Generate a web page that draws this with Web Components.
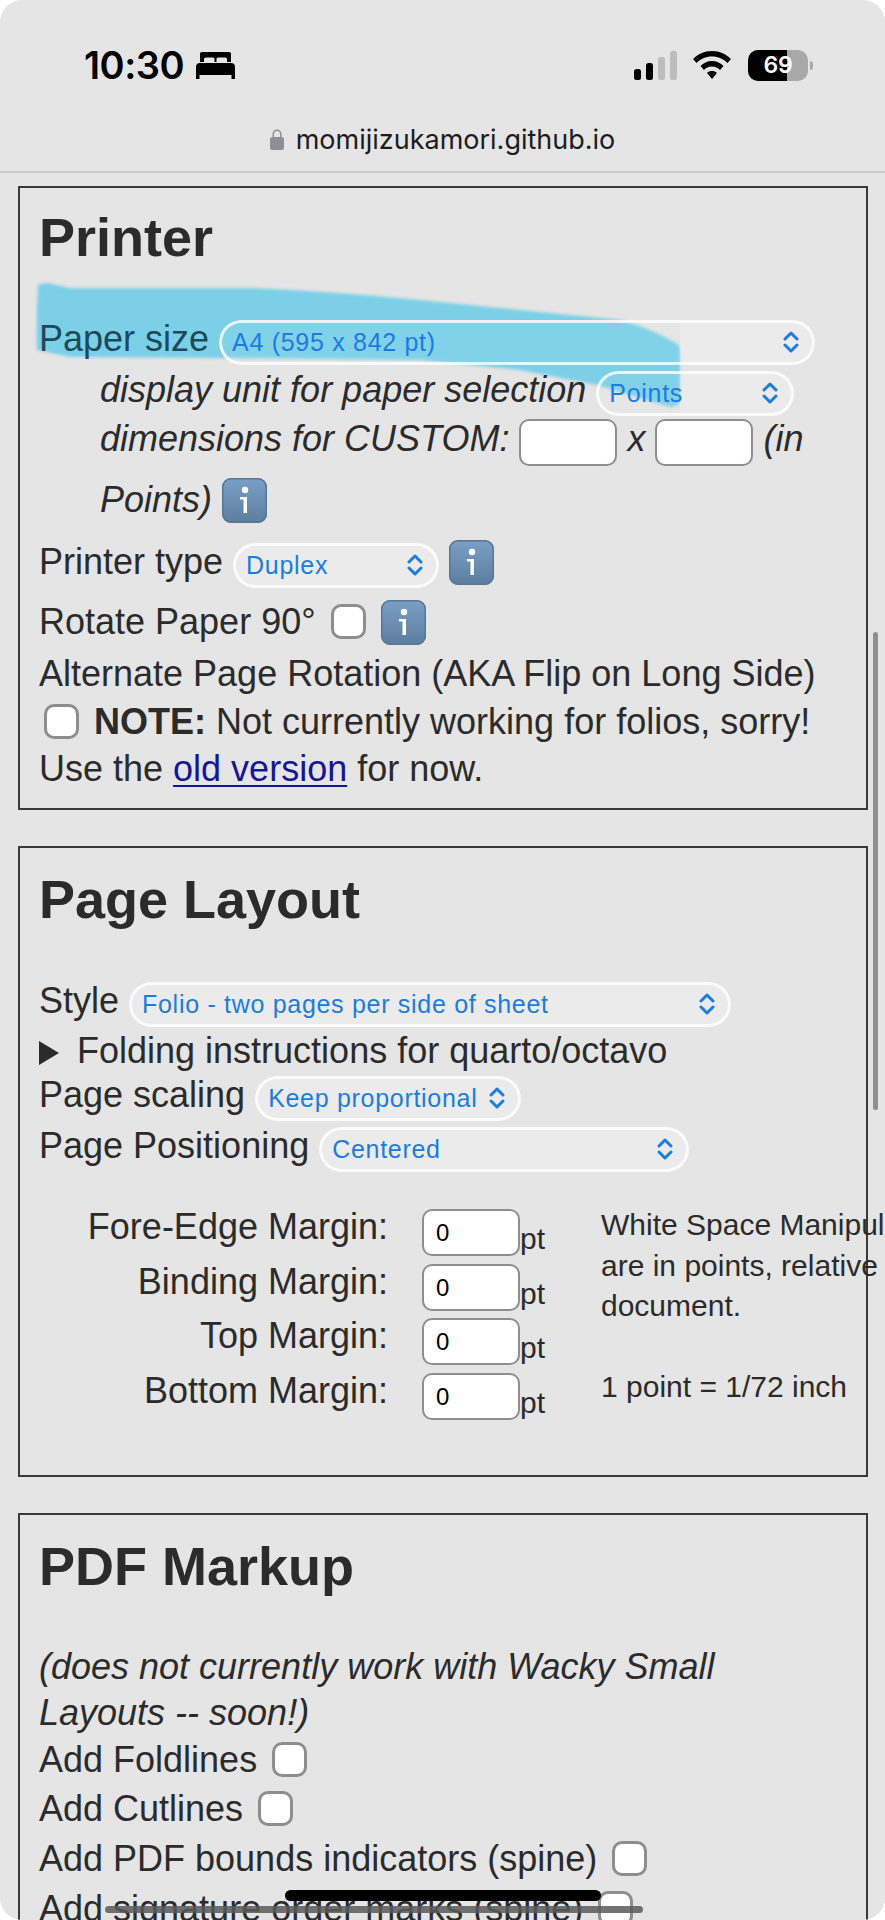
<!DOCTYPE html>
<html>
<head>
<meta charset="utf-8">
<title>Printer settings</title>
<style>
html { background: #fff; }
body { margin: 0; font-family: "Liberation Sans", Arial, sans-serif; color: #2b2b2b; }
a { color: #14149c; text-decoration: underline; text-decoration-thickness: 2px; text-underline-offset: 4px; }
.mark { display: inline-block; vertical-align: middle; margin: 0 18px 0 0; border-left: 20px solid #2b2b2b; border-top: 12px solid transparent; border-bottom: 12px solid transparent; }
.inked { color: #1d4a58; }
</style>
</head>
<body>
<phone-page>
  <status-bar></status-bar>
  <url-bar>momijizukamori.github.io</url-bar>

  <form-panel heading="Printer" pad="15">
    <form-row top="47"><span class="inked">Paper size</span> <select-pill w="596" style="--stop:458px">A4 (595 x 842 pt)</select-pill></form-row>
    <form-row top="3" indent italic>display unit for paper selection <select-pill w="198" style="--stop:81px">Points</select-pill></form-row>
    <form-row top="1" indent italic>dimensions for CUSTOM: <text-box></text-box> x <text-box></text-box> (in</form-row>
    <form-row top="13" indent italic>Points) <info-button></info-button></form-row>
    <form-row top="14">Printer type <select-pill w="206">Duplex</select-pill> <info-button></info-button></form-row>
    <form-row top="12">Rotate Paper 90° <check-box></check-box> <info-button></info-button></form-row>
    <form-row top="4">Alternate Page Rotation (AKA Flip on Long Side)</form-row>
    <form-row><check-box></check-box> <b>NOTE:</b> Not currently working for folios, sorry!</form-row>
    <form-row top="-1">Use the <a href="#">old version</a> for now.</form-row>
  </form-panel>

  <form-panel heading="Page Layout" head="20" pad="50" style="margin-top:36px">
    <form-row top="47">Style <select-pill w="602">Folio - two pages per side of sheet</select-pill></form-row>
    <form-row top="2"><span class="mark"></span>Folding instructions for quarto/octavo</form-row>
    <form-row top="-4">Page scaling <select-pill w="266">Keep proportional</select-pill></form-row>
    <form-row top="3">Page Positioning <select-pill w="370">Centered</select-pill></form-row>
    <margin-table></margin-table>
  </form-panel>

  <form-panel heading="PDF Markup" head="20" pad="40" style="margin-top:36px">
    <form-row top="46" italic>(does not currently work with Wacky Small</form-row>
    <form-row top="-2" italic>Layouts -- soon!)</form-row>
    <form-row top="-1">Add Foldlines <check-box></check-box></form-row>
    <form-row top="1">Add Cutlines <check-box></check-box></form-row>
    <form-row top="2">Add PDF bounds indicators (spine) <check-box></check-box></form-row>
    <form-row top="2">Add signature order marks (spine) <check-box></check-box></form-row>
  </form-panel>

  <home-bar></home-bar>
</phone-page>

<script>
class PhonePage extends HTMLElement {
  constructor() {
    super();
    this.attachShadow({mode: "open"}).innerHTML = `
    <style>
    :host { display: block; position: relative; isolation: isolate; width: 885px; height: 1920px; overflow: hidden; background: #e5e5e5; border-radius: 22px; }
    svg.marker { position: absolute; left: 0; top: 270px; z-index: -1; filter: blur(1.5px); }
    .bar { position: absolute; right: 7px; top: 632px; width: 5px; height: 478px; background: #8f8f8f; border-radius: 3px; }
    </style>
    <svg class="marker" width="700" height="150" viewBox="0 270 700 150">
      <path fill="#7bd0e8" d="M38 285 Q42 283 48 283 L70 288 L253 288 Q340 292 420 300 L520 310 L620 320 Q650 328 670 340 Q680 344 680 350 L680 400 Q678 407 670 407 L597 385 L520 370 L420 360 L220 358 L70 357 L37 350 Q36 320 38 285 Z"/>
    </svg>
    <slot></slot>
    <div class="bar"></div>`;
  }
}

class StatusBar extends HTMLElement {
  constructor() {
    super();
    this.attachShadow({mode: "open"}).innerHTML = `
    <style>
    :host { display: flex; align-items: center; height: 120px; padding: 10px 0 0 84px; box-sizing: border-box; font-family: Inter, sans-serif; color: #000; }
    .time { font-size: 38px; font-weight: 600; letter-spacing: -0.5px; }
    .bed { margin-left: 12px; }
    .right { margin-left: auto; margin-right: 72px; display: flex; align-items: center; }
    .batt { position: relative; width: 60px; height: 31px; border-radius: 10px; overflow: hidden; background: #a9a9a9; margin-left: 17px; font-size: 23px; font-weight: 600; color: #fff; display: flex; align-items: center; justify-content: center; }
    .fill { position: absolute; left: 0; top: 0; bottom: 0; width: 39px; background: #000; }
    .batt span { position: relative; letter-spacing: -0.3px; }
    .nub { width: 3px; height: 9px; margin-left: 2px; background: #a9a9a9; border-radius: 0 3px 3px 0; }
    </style>
    <div class="time">10:30</div>
    <svg class="bed" width="39" height="27" viewBox="0 0 39 27">
      <path fill="#000" d="M4 1.5 Q4 0 6 0 H33 Q35 0 35 1.5 V10 H31 V7 Q31 5.5 29 5.5 H22 Q20.5 5.5 20.5 7 V10 H18.5 V7 Q18.5 5.5 17 5.5 H10 Q8 5.5 8 7 V10 H4 Z M0 15 Q0 11 4 11 H35 Q39 11 39 15 V27 H35.5 V23 H3.5 V27 H0 Z"/>
    </svg>
    <div class="right">
      <svg width="44" height="29" viewBox="0 0 44 29">
        <rect x="0" y="18" width="7" height="11" rx="2.5" fill="#000"/>
        <rect x="12" y="12" width="7" height="17" rx="2.5" fill="#000"/>
        <rect x="24" y="6" width="7" height="23" rx="2.5" fill="#bdbdbd"/>
        <rect x="36" y="0" width="7" height="29" rx="2.5" fill="#bdbdbd"/>
      </svg>
      <svg style="margin-left:15px" width="38" height="29" viewBox="0 0 38 29">
        <path fill="#000" d="M19 0 C27 0 33 3 38 8 L34.5 12 C30.5 8 25.5 5.5 19 5.5 C12.5 5.5 7.5 8 3.5 12 L0 8 C5 3 11 0 19 0 Z M19 10 C24 10 27.5 12 30.5 15 L27 19 C25 17 22.5 15.5 19 15.5 C15.5 15.5 13 17 11 19 L7.5 15 C10.5 12 14 10 19 10 Z M19 20 C21 20 22.5 20.5 24 22 L19 28 L14 22 C15.5 20.5 17 20 19 20 Z"/>
      </svg>
      <div class="batt"><div class="fill"></div><span>69</span></div>
      <div class="nub"></div>
    </div>`;
  }
}

class UrlBar extends HTMLElement {
  constructor() {
    super();
    this.attachShadow({mode: "open"}).innerHTML = `
    <style>
    :host { display: flex; align-items: center; justify-content: center; gap: 12px; height: 38px; padding-bottom: 13px; border-bottom: 2px solid #cdcdcd; margin-bottom: 13px; font-family: Inter, sans-serif; font-size: 27px; color: #1c1c1c; }
    </style>
    <svg width="14" height="21" viewBox="0 0 14 21">
      <path fill="#8e8e93" d="M2.5 8 V5 a4.5 4.5 0 0 1 9 0 V8 H10 V5 a3 3 0 0 0 -6 0 V8 Z"/>
      <rect x="0" y="8" width="14" height="13" rx="2.5" fill="#8e8e93"/>
    </svg>
    <span><slot></slot></span>`;
  }
}

class FormPanel extends HTMLElement {
  constructor() {
    super();
    const pad = this.getAttribute("pad") || 26;
    const head = this.getAttribute("head") || 18;
    this.attachShadow({mode: "open"}).innerHTML = `
    <style>
    :host { display: block; margin: 0 17px 0 18px; border: 2px solid #3a3a3a; padding: 0 18px ${pad}px 19px; font-size: 36px; }
    h2 { margin: 0; padding-top: ${head}px; font-size: 54px; line-height: 62px; font-weight: bold; color: #2b2b2b; }
    </style>
    <h2>${this.getAttribute("heading")}</h2>
    <slot></slot>`;
  }
}

class FormRow extends HTMLElement {
  constructor() {
    super();
    const top = this.getAttribute("top") || 0;
    this.attachShadow({mode: "open"}).innerHTML = `
    <style>
    :host { display: block; white-space: nowrap; height: 48px; line-height: 48px; margin-top: ${top}px; }
    :host([indent]) { padding-left: 61px; }
    :host([italic]) { font-style: italic; }
    </style>
    <slot></slot>`;
  }
}

class SelectPill extends HTMLElement {
  constructor() {
    super();
    this.attachShadow({mode: "open"}).innerHTML = `
    <style>
    :host { display: inline-flex; align-items: center; vertical-align: middle; margin-top: 2px; box-sizing: border-box; width: ${this.getAttribute("w")}px; height: 45px; padding: 0 13px 0 10px; border: 3px solid rgba(255,255,255,.8); border-radius: 23px; background: linear-gradient(90deg, rgba(255,255,255,.05) var(--stop, 0), rgba(255,255,255,.25) 0); color: #1a7be6; font-size: 25px; line-height: 30px; letter-spacing: 0.7px; font-style: normal; }
    svg { margin-left: auto; }
    </style>
    <slot></slot>
    <svg width="16" height="24" viewBox="0 0 16 24" fill="none" stroke="#1a7be6" stroke-width="3" stroke-linecap="round" stroke-linejoin="round">
      <path d="M2 9 L8 3 L14 9 M2 15 L8 21 L14 15"/>
    </svg>`;
  }
}

class InfoButton extends HTMLElement {
  constructor() {
    super();
    this.attachShadow({mode: "open"}).innerHTML = `
    <style>
    :host { display: inline-block; vertical-align: middle; margin-bottom: 3px; width: 45px; height: 45px; border-radius: 9px; background: linear-gradient(#7aa0c6, #5d7d9e); box-shadow: inset 0 0 0 1.5px #587794; }
    svg { display: block; }
    </style>
    <svg width="45" height="45" viewBox="0 0 45 45">
      <circle cx="23" cy="12" r="3.2" fill="#fff"/>
      <path fill="#fff" d="M18 19 H25 V35 H21.5 V21.5 H18 Z"/>
    </svg>`;
  }
}

class CheckBox extends HTMLElement {
  constructor() {
    super();
    this.attachShadow({mode: "open"}).innerHTML = `
    <style>
    :host { display: inline-block; vertical-align: middle; box-sizing: border-box; width: 35px; height: 35px; margin: 0 5px 6px; border: 3px solid #8e8e8e; border-radius: 10px; background: #fff; }
    </style>`;
  }
}

class TextBox extends HTMLElement {
  constructor() {
    super();
    this.attachShadow({mode: "open"}).innerHTML = `
    <style>
    :host { display: inline-block; vertical-align: middle; margin-top: 2px; box-sizing: border-box; width: 98px; height: 47px; padding-left: 12px; border: 2px solid #8e8e8e; border-radius: 10px; background: #fff; color: #000; font-family: "Liberation Sans", sans-serif; font-size: 24px; line-height: 43px; font-style: normal; }
    </style>
    <slot></slot>`;
  }
}

class MarginTable extends HTMLElement {
  constructor() {
    super();
    this.attachShadow({mode: "open"}).innerHTML = `
    <style>
    :host { display: flex; align-items: flex-start; margin-top: 37px; width: 900px; }
    .grid { display: grid; grid-template-columns: 383px 98px 81px; grid-auto-rows: 54.5px; }
    .lab { text-align: right; padding-right: 34px; white-space: nowrap; line-height: 40px; }
    .pt { font-size: 30px; padding-top: 12px; line-height: 40px; }
    .note { font-size: 30px; line-height: 40.5px; white-space: pre; margin-top: -2px; }
    </style>
    <div class="grid">
      <div class="lab">Fore-Edge Margin:</div><text-box>0</text-box><div class="pt">pt</div>
      <div class="lab">Binding Margin:</div><text-box>0</text-box><div class="pt">pt</div>
      <div class="lab">Top Margin:</div><text-box>0</text-box><div class="pt">pt</div>
      <div class="lab">Bottom Margin:</div><text-box>0</text-box><div class="pt">pt</div>
    </div>
    <div class="note">White Space Manipul
are in points, relative
document.

1 point = 1/72 inch</div>`;
  }
}

class HomeBar extends HTMLElement {
  constructor() {
    super();
    this.attachShadow({mode: "open"}).innerHTML = `
    <style>
    :host { display: block; }
    .line { position: absolute; left: 105px; top: 1906px; width: 538px; height: 7px; border-radius: 4px; background: rgba(90,90,90,.85); }
    .pill { position: absolute; left: 285px; top: 1890px; width: 316px; height: 11px; border-radius: 6px; background: #000; }
    </style>
    <div class="line"></div>
    <div class="pill"></div>`;
  }
}

customElements.define("phone-page", PhonePage);
customElements.define("status-bar", StatusBar);
customElements.define("url-bar", UrlBar);
customElements.define("form-panel", FormPanel);
customElements.define("form-row", FormRow);
customElements.define("select-pill", SelectPill);
customElements.define("info-button", InfoButton);
customElements.define("check-box", CheckBox);
customElements.define("text-box", TextBox);
customElements.define("margin-table", MarginTable);
customElements.define("home-bar", HomeBar);
</script>
</body>
</html>
